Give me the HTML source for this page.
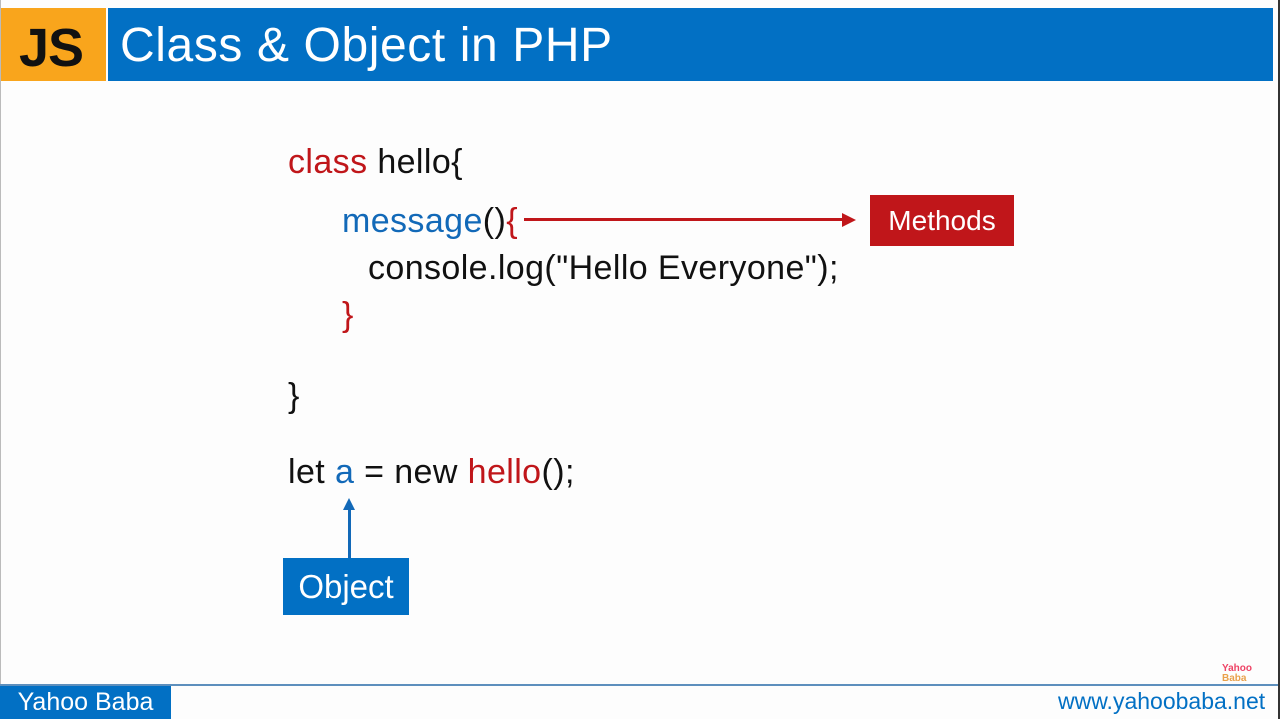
<!DOCTYPE html>
<html><head><meta charset="utf-8"><style>
body{margin:0;width:1280px;height:719px;background:#fdfdfd;position:relative;overflow:hidden;font-family:"Liberation Sans",sans-serif}
div,span{position:absolute}
.code{font-size:34px;color:#111;white-space:pre;line-height:1;letter-spacing:0.4px}
.r{color:#c0161a;position:static}.b{color:#1269b8;position:static}
</style></head><body>
<div style="left:0;top:0;width:1px;height:719px;background:#bbb"></div>
<div style="left:1px;top:8px;width:105px;height:73px;background:#f9a51c"></div>
<div style="left:19px;top:17px;font-size:54px;font-weight:bold;color:#111;letter-spacing:-1px">JS</div>
<div style="left:108px;top:8px;width:1165px;height:73px;background:#0270c4"></div>
<div style="left:1278px;top:0;width:2px;height:719px;background:#333"></div>
<div style="left:120px;top:18px;font-size:48px;color:#fff;letter-spacing:0.6px">Class &amp; Object in PHP</div>

<div class="code" style="left:288px;top:145px"><span class="r">class</span> hello{</div>
<div class="code" style="left:342px;top:204px"><span class="b">message</span>()<span class="r">{</span></div>
<div class="code" style="left:368px;top:251px">console.log("Hello Everyone");</div>
<div class="code r" style="position:absolute;left:342px;top:298px">}</div>
<div class="code" style="left:288px;top:379px">}</div>
<div class="code" style="left:288px;top:455px">let <span class="b">a</span> = new <span class="r">hello</span>();</div>

<div style="left:524px;top:218px;width:320px;height:3px;background:#c0161a"></div>
<div style="left:842px;top:213px;width:0;height:0;border-left:14px solid #c0161a;border-top:7px solid transparent;border-bottom:7px solid transparent"></div>
<div style="left:870px;top:195px;width:144px;height:51px;background:#c0161a;color:#fff;font-size:28px;line-height:51px;text-align:center">Methods</div>

<div style="left:348px;top:508px;width:3px;height:50px;background:#1269b8"></div>
<div style="left:343px;top:498px;width:0;height:0;border-bottom:12px solid #1269b8;border-left:6px solid transparent;border-right:6px solid transparent"></div>
<div style="left:283px;top:558px;width:126px;height:57px;background:#0270c4;color:#fff;font-size:33px;line-height:57px;text-align:center">Object</div>

<div style="left:0;top:684px;width:1278px;height:2px;background:#5d8fbd"></div>
<div style="left:0;top:686px;width:171px;height:33px;background:#0270c4;color:#fff;font-size:25px;line-height:33px;text-align:center">Yahoo Baba</div>
<div style="left:1058px;top:688px;font-size:23px;color:#0270c4">www.yahoobaba.net</div>
<div style="left:1222px;top:664px;font-size:10px;color:#e46;line-height:10px;font-weight:bold">Yahoo<br><span style="position:static;color:#e9a04a">Baba</span></div>
</body></html>
